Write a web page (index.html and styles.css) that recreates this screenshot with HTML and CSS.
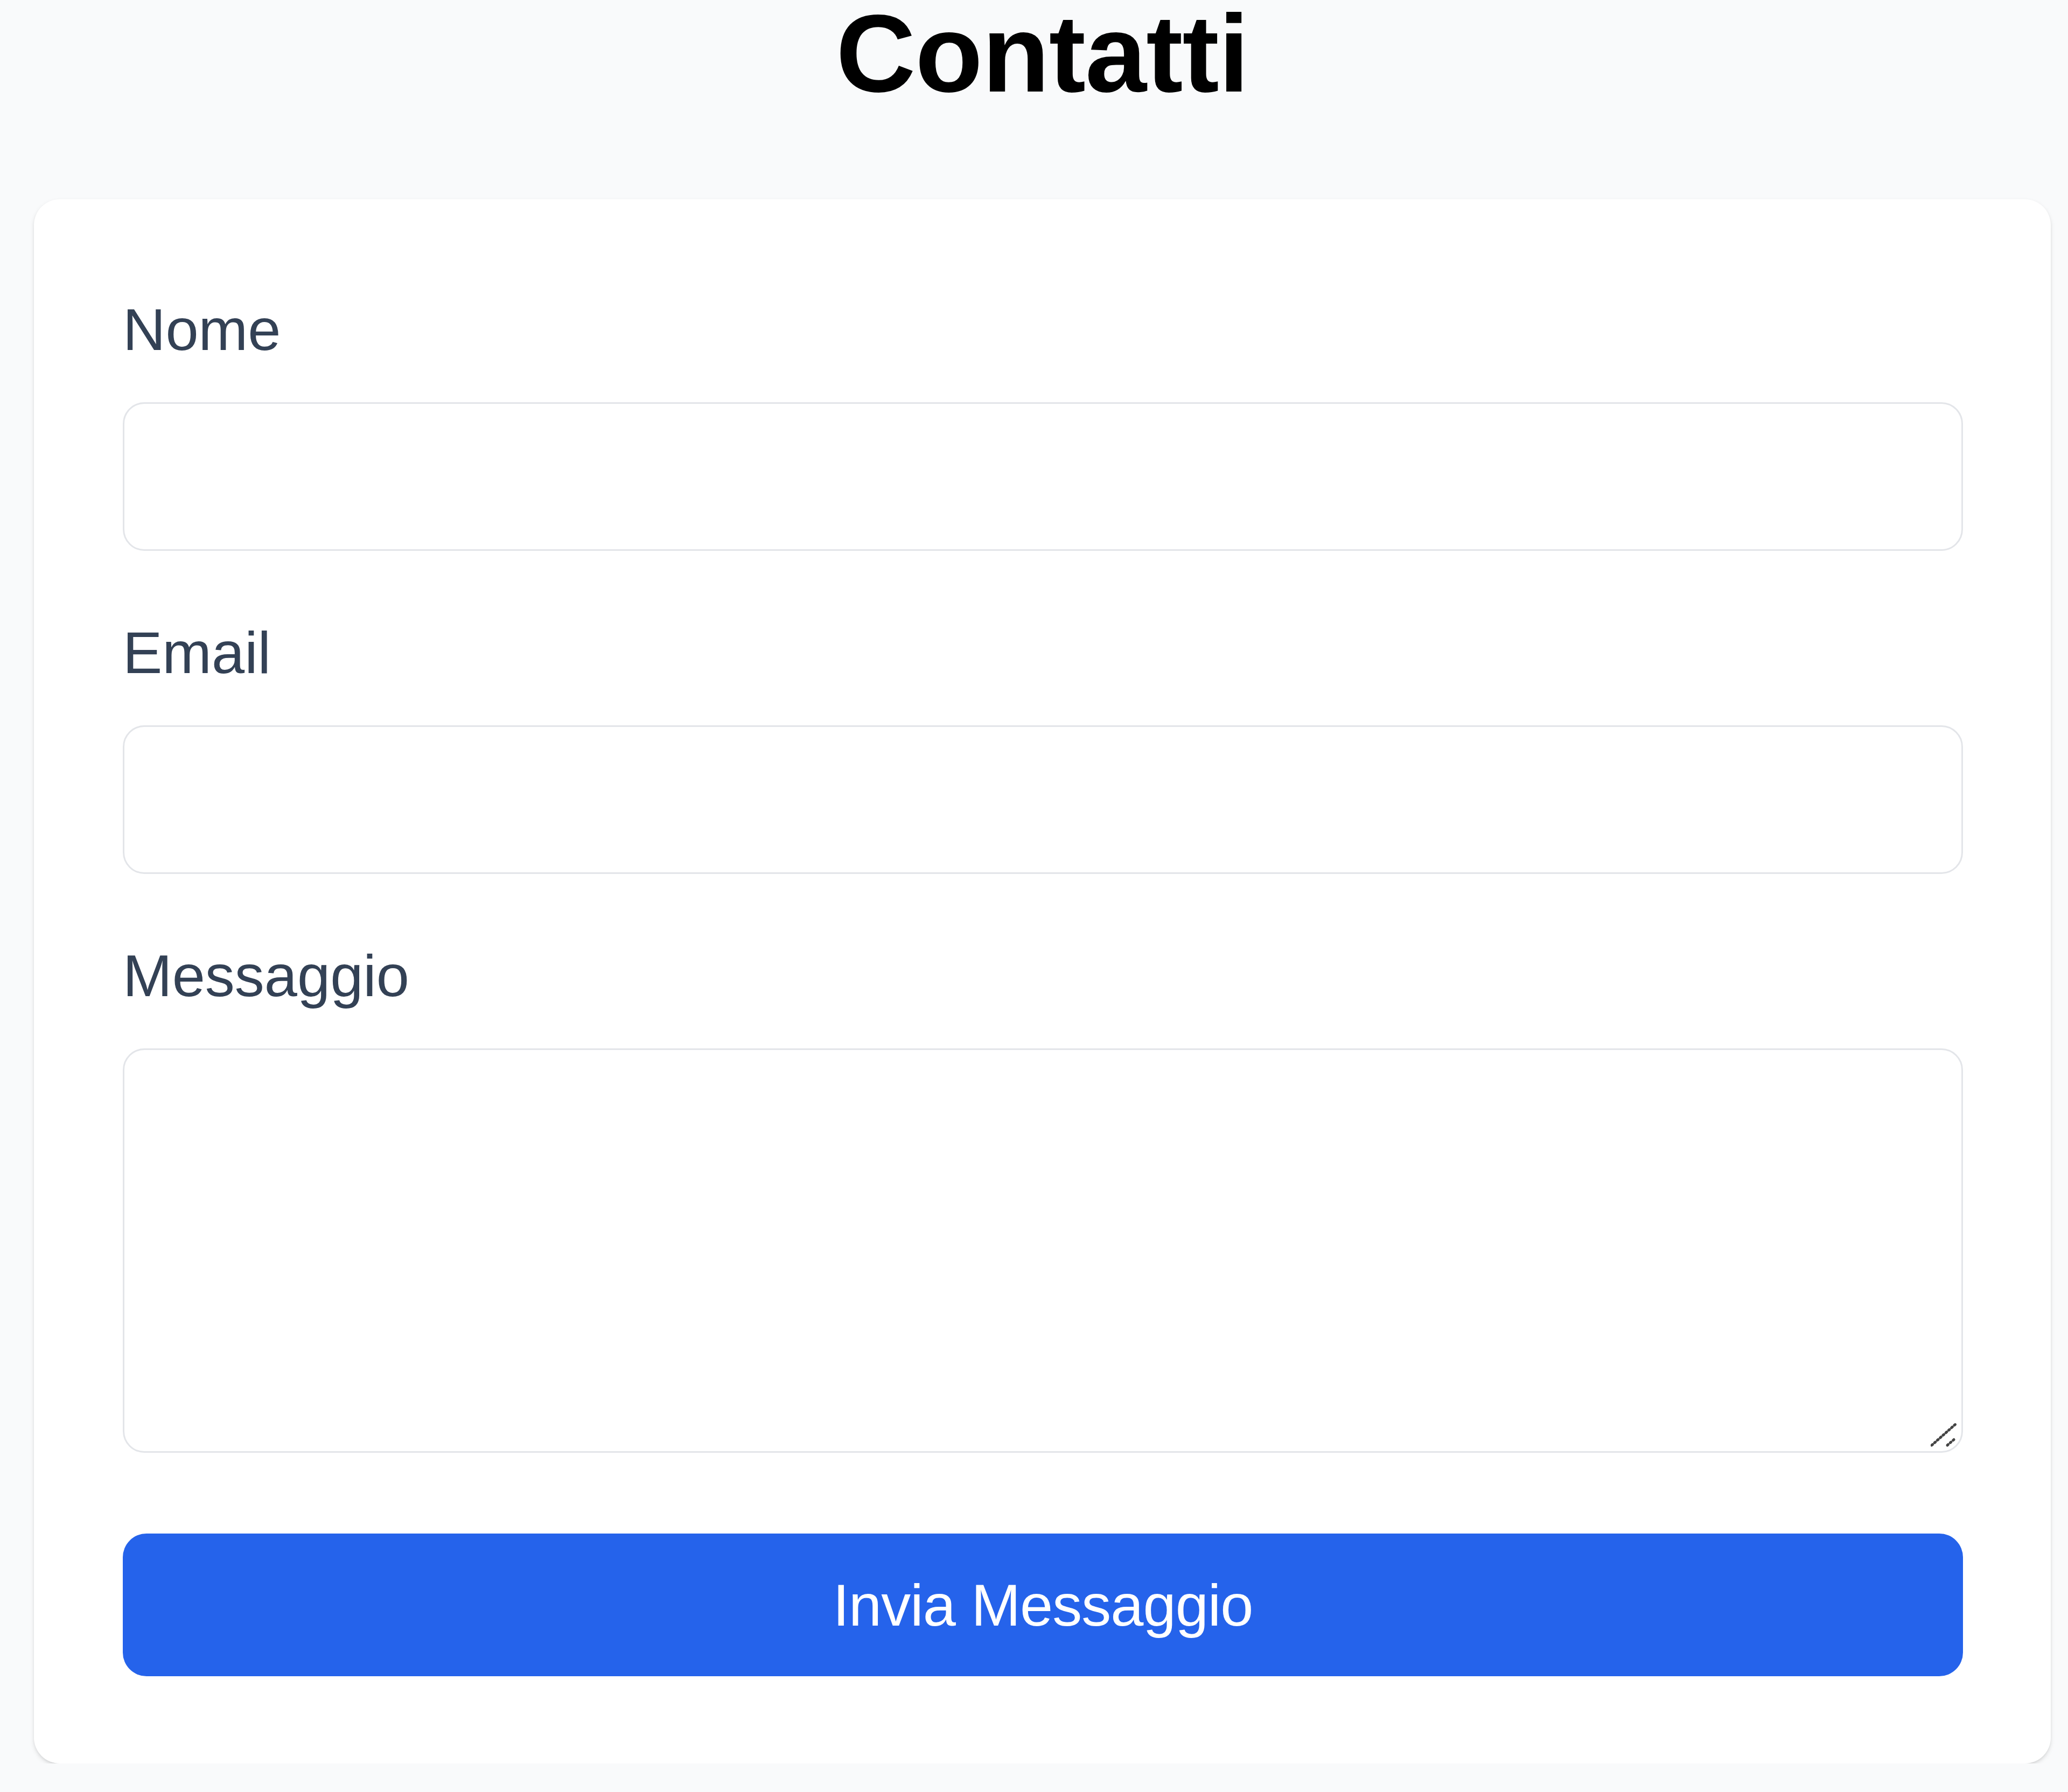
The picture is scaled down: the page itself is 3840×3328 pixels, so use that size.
FILE: index.html
```html
<!DOCTYPE html>
<html lang="it">
  <head>
    <meta charset="UTF-8" />
    <meta name="viewport" content="width=device-width, initial-scale=1.0" />
    <title>Contatti</title>
    <link rel="stylesheet" href="styles.css">
  </head>
  <body>
    <main class="page">
      <h1 class="page-title">Contatti</h1>
      <form class="contact-card" onsubmit="return false;">
        <div class="field">
          <label class="field-label" for="nome">Nome</label>
          <input class="field-input" type="text" id="nome" name="nome" />
        </div>
        <div class="field">
          <label class="field-label" for="email">Email</label>
          <input class="field-input" type="email" id="email" name="email" />
        </div>
        <div class="field field-message">
          <label class="field-label" for="messaggio">Messaggio</label>
          <div class="textarea-wrap">
            <textarea class="field-input field-textarea" id="messaggio" name="messaggio"></textarea>
            <!-- resize grip in the corner -->
            <svg class="grip" viewBox="0 0 60 60" aria-hidden="true">
              <line x1="2" y1="46" x2="46" y2="7" />
              <line x1="31" y1="46" x2="46" y2="33" />
            </svg>
          </div>
        </div>
        <button class="submit-button" type="submit">Invia Messaggio</button>
      </form>
    </main>
  </body>
</html>
```

FILE: styles.css
```css
/* Reset default styles */
* {
  margin: 0;
  padding: 0;
  box-sizing: border-box;
}

body {
  font-family: "Liberation Sans", Arial, sans-serif;
  background-color: #f9fafb; /* Light gray page */
  color: #000;
}

.page {
  padding: 4px 32px 0 63px;
}

.page-title {
  font-size: 205px;
  line-height: 190px;
  font-weight: 700;
  text-align: center;
  letter-spacing: -1px;
  color: #000;
  margin-bottom: 176px; /* Space above the card */
}

.contact-card {
  background-color: #fff;
  border-radius: 48px;
  box-shadow: 0 4px 10px rgba(0, 0, 0, 0.09), 0 3px 6px -2px rgba(0, 0, 0, 0.12);
  padding: 160px 163px 162px 165px;
}

.field {
  margin-bottom: 107px; /* Space between groups */
}

.field-message {
  margin-bottom: 150px;
}

.field-label {
  display: block;
  font-size: 110px;
  line-height: 164px;
  color: #334155; /* Slate labels */
  margin-bottom: 53px;
}

.field-input {
  display: block;
  width: 100%;
  height: 276px;
  border: 3px solid #e3e5e9;
  border-radius: 40px;
  background-color: #fff;
  padding: 0 54px;
  font-family: inherit;
  font-size: 110px;
  color: #111827;
  outline: none;
}

.textarea-wrap {
  position: relative;
}

.field-textarea {
  height: 751px;
  padding: 54px;
  resize: none;
}

.grip {
  position: absolute;
  right: 0;
  bottom: 0;
  width: 60px;
  height: 60px;
  stroke: #444;
  stroke-width: 5;
  stroke-linecap: round;
  stroke-dasharray: 2 5;
  pointer-events: none;
}

.submit-button {
  display: block;
  width: 100%;
  height: 265px;
  background-color: #2563eb; /* Blue button */
  border: none;
  border-radius: 44px;
  color: #fff;
  font-family: inherit;
  font-size: 110px;
  letter-spacing: -1px;
  cursor: pointer;
}

.submit-button:hover {
  background-color: #1d4ed8;
}
```
